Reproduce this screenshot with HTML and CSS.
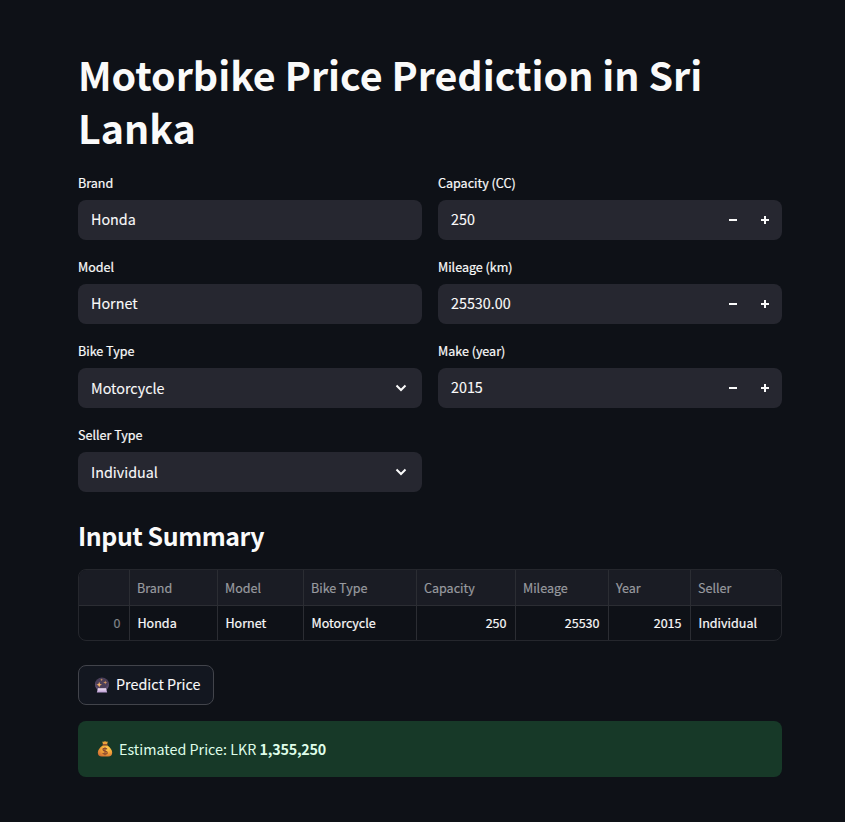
FILE: index.html
```html
<!DOCTYPE html>
<html lang="en">
<head>
<meta charset="utf-8">
<title>Motorbike Price Prediction</title>
<link rel="stylesheet" href="styles.css">
</head>
<body>
<main class="page">
  <h1 class="title">Motorbike Price Prediction in Sri Lanka</h1>
  <div class="columns">
    <div class="column">
      <div class="field"><div class="label">Brand</div><div class="input"><span class="value">Honda</span></div></div>
      <div class="field"><div class="label">Model</div><div class="input"><span class="value">Hornet</span></div></div>
      <div class="field"><div class="label">Bike Type</div><div class="input select"><span class="value">Motorcycle</span><svg class="chevron" viewBox="0 0 12 8"><path d="M1.5 1.5 6 6 10.5 1.5"/></svg></div></div>
      <div class="field"><div class="label">Seller Type</div><div class="input select"><span class="value">Individual</span><svg class="chevron" viewBox="0 0 12 8"><path d="M1.5 1.5 6 6 10.5 1.5"/></svg></div></div>
    </div>
    <div class="column">
      <div class="field"><div class="label">Capacity (CC)</div><div class="input"><span class="value">250</span><span class="step"><svg viewBox="0 0 8 8"><path d="M0 3h8v2H0z"/></svg></span><span class="step"><svg viewBox="0 0 8 8"><path d="M0 3h3V0h2v3h3v2H5v3H3V5H0z"/></svg></span></div></div>
      <div class="field"><div class="label">Mileage (km)</div><div class="input"><span class="value">25530.00</span><span class="step"><svg viewBox="0 0 8 8"><path d="M0 3h8v2H0z"/></svg></span><span class="step"><svg viewBox="0 0 8 8"><path d="M0 3h3V0h2v3h3v2H5v3H3V5H0z"/></svg></span></div></div>
      <div class="field"><div class="label">Make (year)</div><div class="input"><span class="value">2015</span><span class="step"><svg viewBox="0 0 8 8"><path d="M0 3h8v2H0z"/></svg></span><span class="step"><svg viewBox="0 0 8 8"><path d="M0 3h3V0h2v3h3v2H5v3H3V5H0z"/></svg></span></div></div>
    </div>
  </div>
  <h3 class="subtitle">Input Summary</h3>
  <div class="table">
    <div class="row head"><span></span><span>Brand</span><span>Model</span><span>Bike Type</span><span>Capacity</span><span>Mileage</span><span>Year</span><span>Seller</span></div>
    <div class="row body"><span class="num index">0</span><span>Honda</span><span>Hornet</span><span>Motorcycle</span><span class="num">250</span><span class="num">25530</span><span class="num">2015</span><span>Individual</span></div>
  </div>
  <button class="button" type="button">
    <svg class="emoji" viewBox="0 0 16 16">
      <defs>
        <radialGradient id="ball" cx=".5" cy=".35" r=".65"><stop offset="0" stop-color="#4c4058"/><stop offset=".6" stop-color="#493d58"/><stop offset="1" stop-color="#73608a"/></radialGradient>
        <linearGradient id="base" x2="0" y2="1"><stop stop-color="#f3e4f8"/><stop offset="1" stop-color="#b798cf"/></linearGradient>
      </defs>
      <circle cx="8" cy="7.4" r="7" fill="url(#ball)"/>
      <path d="M4 11.3h8l1.2 4.3H2.8z" fill="url(#base)"/>
      <path d="m5.2 4.8.8 2.1 2 .8-2 .8-.8 2.1-.8-2.1-2-.8 2-.8z" fill="#f5b36a"/>
      <path d="m11.2 3.4.5 1.5 1.6.6-1.6.6-.5 1.5-.5-1.5-1.6-.6 1.6-.6z" fill="#d69a62"/>
      <path d="m7.6 1.5.4.9.9.4-.9.4-.4.9-.4-.9-.9-.4.9-.4z" fill="#d69a62"/>
    </svg>
    <span class="caption">Predict Price</span>
  </button>
  <div class="alert">
    <svg class="emoji" viewBox="0 0 16 16">
      <defs><radialGradient id="bag" cx=".65" cy=".3" r=".8"><stop offset="0" stop-color="#ffd04e"/><stop offset=".5" stop-color="#f2a339"/><stop offset="1" stop-color="#cf6c32"/></radialGradient></defs>
      <path d="M5.2.6Q6.7 1.1 8 .3q1.4.8 2.9.3L10.1 3.2H6z" fill="#eaa13a"/>
      <path d="M6 4.2h4.2q5 3.7 5 7.4 0 4-4 4H4.8q-4 0-4-4 0-3.7 5.2-7.4z" fill="url(#bag)"/>
      <path d="M5.7 3h4.7v1.4H5.7z" fill="#96502f"/>
      <path d="M10.1 8.2Q9.6 7.3 8 7.3q-2 0-2 1.3T8 10.1q2.2.2 2.2 1.6T8 13.1q-1.800 0-2.300-1.100M8 6.300v7.900" fill="none" stroke="#8c4a30" stroke-width="1.2"/>
    </svg>
    <span>Estimated Price: LKR <strong>1,355,250</strong></span>
  </div>
</main>
</body>
</html>
```

FILE: styles.css
```css
* { box-sizing: border-box; }

body {
  margin: 0;
  min-height: 822px;
  background: #0e1117;
  color: #fafafa;
  font-family: "Noto Sans CJK JP", "Noto Sans", sans-serif;
  font-size: 14.33px;
  line-height: 24px;
}

.page {
  width: 704px;
  margin-left: 78px;
  padding-top: 47px;
}

.title {
  margin: 0 0 19px;
  font-size: 39.4px;
  font-weight: 700;
  line-height: 53px;
}

.columns {
  display: grid;
  grid-template-columns: 1fr 1fr;
  gap: 16px;
}

.column {
  display: flex;
  flex-direction: column;
  gap: 16px;
}

.field { height: 68px; }

.label {
  height: 28px;
  padding-top: 1px;
  font-size: 12.54px;
  line-height: 20px;
  -webkit-text-stroke: 0.2px;
}

.input {
  display: flex;
  align-items: center;
  height: 40px;
  padding-left: 13px;
  border-radius: 8px;
  background: #262730;
}

.value {
  flex: 1;
  padding-bottom: 2px;
  -webkit-text-stroke: 0.1px;
}

.select .value { padding-bottom: 0; }

.step {
  display: flex;
  align-items: center;
  justify-content: center;
  width: 32px;
  height: 40px;
}

.step:last-child { margin-right: 1px; }
.step svg { width: 8px; height: 8px; fill: #fafafa; }

.chevron {
  width: 12px;
  height: 8px;
  margin-right: 15px;
  fill: none;
  stroke: #fafafa;
  stroke-width: 2;
}

.subtitle {
  margin: 26px 0 17px;
  font-size: 24.9px;
  font-weight: 700;
  letter-spacing: -0.43px;
  line-height: 34px;
}

.table {
  overflow: hidden;
  border: 1px solid #25272d;
  border-radius: 8px;
  font-size: 12.54px;
  -webkit-text-stroke: 0.2px;
}

.row {
  display: grid;
  grid-template-columns: 51px 88px 86px 113px 99px 93px 82px 1fr;
  height: 34px;
  line-height: 34px;
}

.row span { padding: 0 8px 0 7px; border-right: 1px solid #2b2d33; }
.row span:last-child { border-right: 0; }

.head {
  height: 36px;
  border-bottom: 1px solid #2b2d33;
  background: #1a1c24;
  color: #989a9f;
  line-height: 36px;
}

.body span { padding-left: 7.5px; }
.row .num { padding-right: 8.5px; text-align: right; }
.row .index { color: #808388; }

.button {
  display: flex;
  align-items: center;
  width: 136px;
  height: 40px;
  margin: 24px 0 16px;
  padding: 0 0 0 15px;
  border: 1px solid #42444b;
  border-radius: 8px;
  background: #131720;
  color: inherit;
  font: inherit;
}

.caption {
  padding-bottom: 2px;
  -webkit-text-stroke: 0.1px;
}

.emoji { width: 16px; height: 16px; margin-right: 6px; }

.alert {
  display: flex;
  align-items: center;
  height: 56px;
  padding-left: 19px;
  border-radius: 8px;
  background: #173928;
  color: #dffde9;
}

.alert strong {
  font-weight: 700;
  letter-spacing: -0.22px;
}
```
